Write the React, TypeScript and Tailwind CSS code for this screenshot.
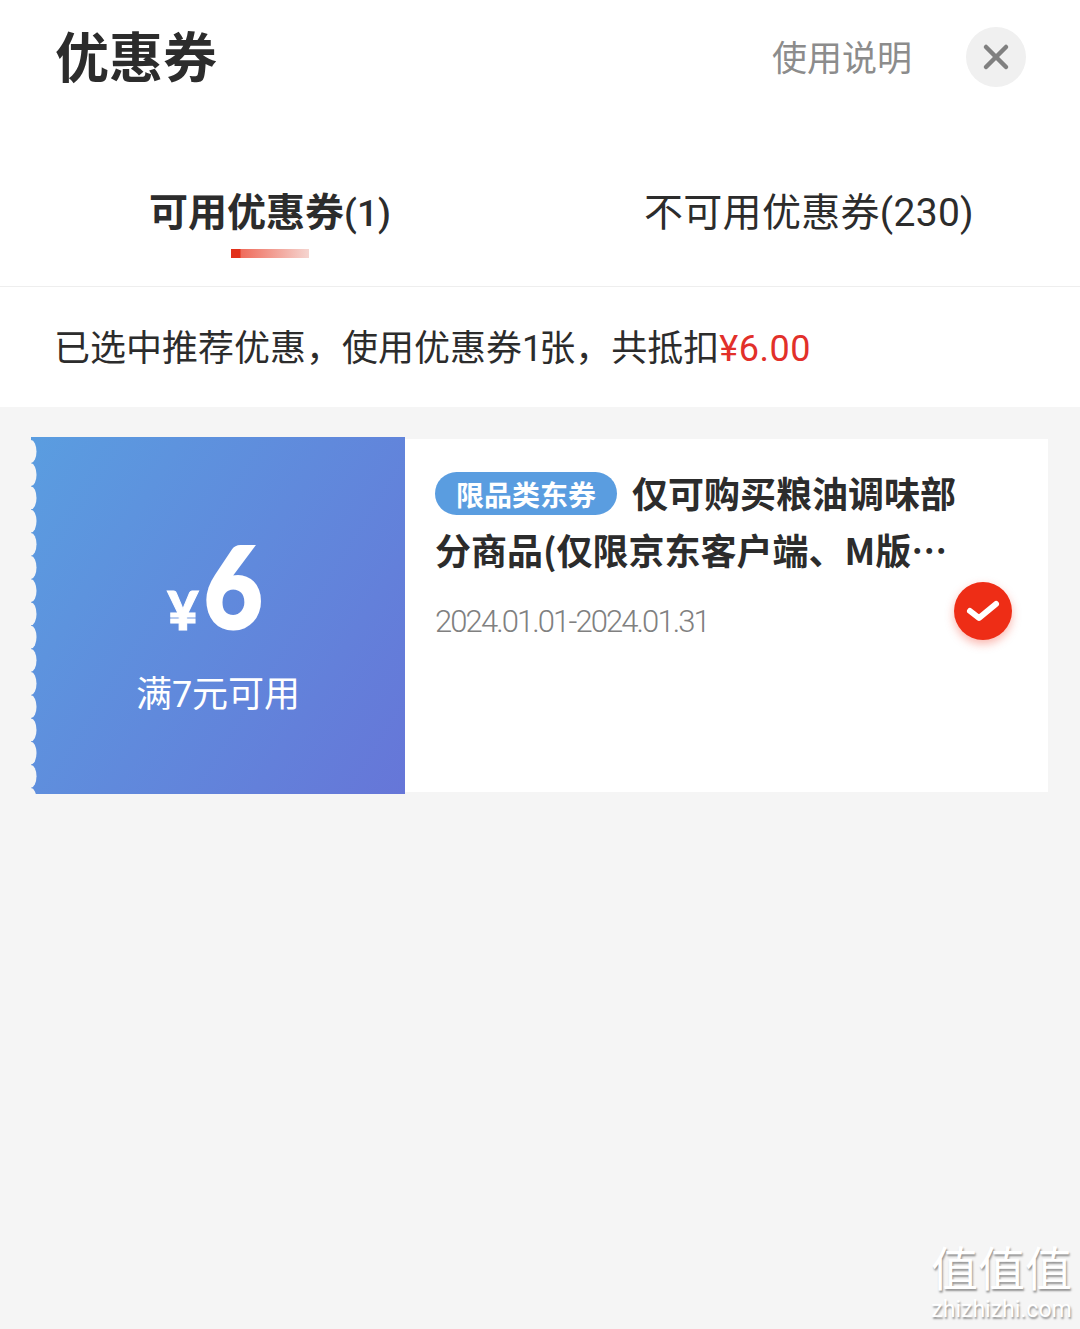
const sans = "font-['Roboto','Noto_Sans_CJK_SC',sans-serif]"

function ScallopEdge() {
  const bites = Array.from({ length: 16 }, (_, i) => i)
  return (
    <svg className="absolute left-0 top-0" width="8" height="357" viewBox="0 0 8 357">
      {bites.map((i) => (
        <ellipse key={i} cx="0" cy={14.5 + i * 23.2} rx="5.5" ry="11.4" fill="#f5f5f5" />
      ))}
    </svg>
  )
}

export default function App() {
  return (
    <div className={`${sans} relative flex h-[1329px] w-[1080px] flex-col overflow-hidden bg-[#f5f5f5] text-[#2c2c2c]`}>
      <div className="bg-white">
        <div className="flex h-[116px] items-start justify-between pl-[55px] pr-[54px] pt-[27px]">
          <h1 className="pt-[3px] text-[54px] font-bold leading-[60px]">优惠券</h1>
          <div className="flex items-start gap-[54px]">
            <span className="pt-[3px] text-[35px] leading-[60px] text-[#8c8c8c]">使用说明</span>
            <button className="flex h-[60px] w-[60px] items-center justify-center rounded-full bg-[#f0f0f0]">
              <svg width="28" height="28" viewBox="0 0 28 28" fill="none" stroke="#808080" strokeWidth="4.5" strokeLinecap="round">
                <path d="M4 4 L24 24" />
                <path d="M24 4 L4 24" />
              </svg>
            </button>
          </div>
        </div>

        <div className="flex h-[171px] border-b border-[#eeeeee]">
          <div className="flex w-[540px] flex-col items-center pt-[71px]">
            <span className="text-[39px] font-bold leading-[52px]">
              可用优惠券<span className="text-[37px] font-medium">(1)</span>
            </span>
            <div className="mt-[9px] h-[9px] w-[78px] bg-[linear-gradient(90deg,#e2301a_0,#e2301a_9px,#ef6c5c_10px,#f5d5d0_100%)]" />
          </div>
          <div className="flex w-[540px] justify-center pt-[71px]">
            <span className="-ml-[2px] text-[39px] leading-[52px] tracking-[0.3px]">不可用优惠券(230)</span>
          </div>
        </div>

        <div className="flex h-[120px] items-start pl-[54px] pt-[37px] text-[36px] leading-[50px]">
          <span>
            已选中推荐优惠，使用优惠券<span className="tracking-[-3px]">1</span>张，共抵扣
            <span className="tracking-[0.5px] text-[#e2302a]">¥6.00</span>
          </span>
        </div>
      </div>

      <div className="flex items-center pl-[31px] pr-[32px] pt-[30px]">
        <div className="relative flex h-[357px] w-[374px] shrink-0 flex-col items-center bg-[linear-gradient(122deg,#5a9de0,#6676d8)] text-white">
          <ScallopEdge />
          <div className="mt-[94px] flex h-[112px] items-end font-['Lato',sans-serif]">
            <span className="mb-[3px] mr-[5px] text-[54px] font-black leading-[60px] [-webkit-text-stroke:1px_white]">¥</span>
            <span className="mb-[2px] inline-block origin-left scale-x-[0.9] text-[112px] font-black leading-[112px] [-webkit-text-stroke:3px_white]">6</span>
          </div>
          <span className="mt-[27px] text-[36px] leading-[50px]">满7元可用</span>
        </div>

        <div className="relative h-[353px] flex-1 bg-white pl-[30px] pr-[83px] pt-[25px]">
          <p lang="zh-CN" className="line-clamp-2 font-['Noto_Sans_CJK_SC',sans-serif] text-[36px] font-bold leading-[57px]">
            <span className="mr-[15px] inline-block h-[43px] rounded-full bg-[#5a9de0] px-[21px] align-[2px] text-[28px] font-bold leading-[45px] text-white">
              限品类东券
            </span>
            仅可购买粮油调味部分商品(仅限京东客户端、M版小程序使用)
          </p>
          <p className="mt-[24px] text-[31px] font-light leading-[40px] tracking-[-1.9px] text-[#808080]">2024.01.01-2024.01.31</p>
          <div className="absolute left-[549px] top-[143px] flex h-[58px] w-[58px] items-center justify-center rounded-full bg-[#ee2d16] shadow-[0_4px_10px_rgba(240,45,23,0.35)]">
            <svg width="34" height="26" viewBox="0 0 34 26" fill="none" stroke="white" strokeWidth="6" strokeLinecap="round" strokeLinejoin="round">
              <path d="M4 13 L13 20 L30 6" />
            </svg>
          </div>
        </div>
      </div>

      <div className="absolute bottom-[6px] right-[8px] flex flex-col items-center text-white [text-shadow:1px_2px_2px_rgba(0,0,0,0.4)]">
        <span className="text-[47px] leading-[54px]">值值值</span>
        <span className="text-[23px] leading-[26px]">zhizhizhi.com</span>
      </div>
    </div>
  )
}
